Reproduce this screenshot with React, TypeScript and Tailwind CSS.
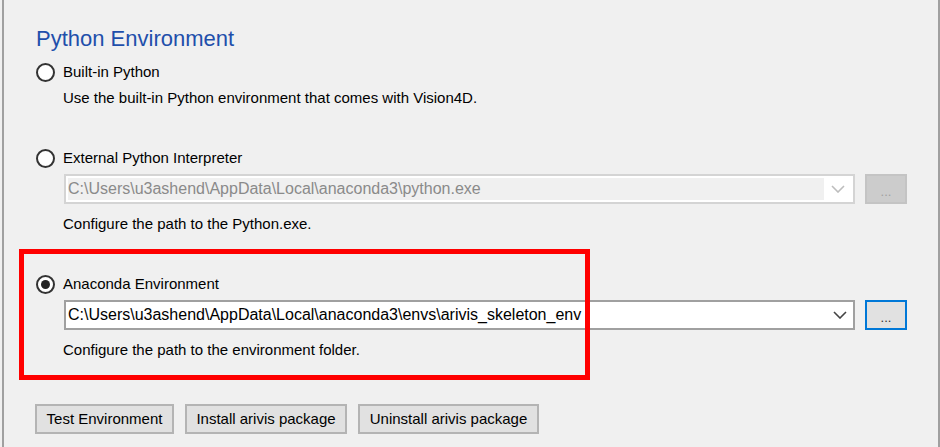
import React from 'react';

const font = { fontFamily: '"Liberation Sans", Arial, sans-serif' };

// === Radio button ===
const Radio = ({ checked, label }: { checked?: boolean; label: string }) => (
  <div className="flex h-[20px] items-center">
    <span className="ml-[32px] flex size-[19px] items-center justify-center rounded-full border-2 border-[#333333] bg-white">
      {checked && <span className="size-[9px] rounded-full bg-[#222222]" />}
    </span>
    <span className="ml-[8px] text-[15px] leading-[20px] text-black">{label}</span>
  </div>
);

const Chevron = ({ color }: { color: string }) => (
  <svg width="14" height="8" viewBox="0 0 14 8" fill="none">
    <path d="M1 1 L7 7 L13 1" stroke={color} strokeWidth="1.6" />
  </svg>
);

// === Path combobox with browse button ===
const PathRow = ({ value, disabled }: { value: string; disabled?: boolean }) => (
  <div className="ml-[60px] flex h-[30px] items-stretch">
    {disabled ? (
      <div className="flex w-[791px] items-stretch border-2 border-[#d4d4d4] bg-white p-[2px]">
        <div className="flex flex-1 items-center bg-[#f0f0f0] pl-[0px] text-[16px] text-[#8a8a8a]">{value}</div>
        <div className="flex w-[27px] items-center justify-center">
          <Chevron color="#bdbdbd" />
        </div>
      </div>
    ) : (
      <div className="flex w-[791px] items-center border-2 border-[#a0a0a0] bg-white">
        <div className="flex flex-1 items-center pl-[2px] text-[16px] text-black">{value}</div>
        <div className="flex w-[27px] items-center justify-center">
          <Chevron color="#444444" />
        </div>
      </div>
    )}
    <button
      className={
        disabled
          ? 'ml-[10px] flex w-[42px] items-end justify-center border-2 border-[#c4c4c4] bg-[#cccccc] pb-[3px] text-[13px] leading-[14px] text-[#a0a0a0]'
          : 'ml-[10px] flex w-[42px] items-end justify-center border-2 border-[#0078d7] bg-[#e1e1e1] pb-[3px] text-[13px] leading-[14px] text-[#333333]'
      }
    >
      ...
    </button>
  </div>
);

const Desc = ({ text, className }: { text: string; className: string }) => (
  <div className={`ml-[59px] text-[15px] leading-[20px] text-black ${className}`}>{text}</div>
);

const ActionButton = ({ label, width }: { label: string; width: string }) => (
  <button className={`flex h-[30px] ${width} items-center justify-center border-2 border-[#b4b4b4] bg-[#e1e1e1] text-[15px] text-black`}>
    {label}
  </button>
);

const App = () => {
  return (
    <div className="relative h-[447px] w-[940px] overflow-hidden bg-[#f0f0f0] pl-[2px]" style={font}>
      <div className="flex h-full flex-col border-x-2 border-[#a0a0a0]">
        {/* === Title === */}
        <div className="ml-[32px] pt-[27px] text-[22px] leading-[24px] text-[#1f4fab]">Python Environment</div>

        {/* === Built-in === */}
        <div className="mt-[11px]">
          <Radio label="Built-in Python" />
        </div>
        <Desc className="mt-[6px]" text="Use the built-in Python environment that comes with Vision4D." />

        {/* === External interpreter === */}
        <div className="mt-[40px]">
          <Radio label="External Python Interpreter" />
        </div>
        <div className="mt-[6px]">
          <PathRow disabled value="C:\Users\u3ashend\AppData\Local\anaconda3\python.exe" />
        </div>
        <Desc className="mt-[10px]" text="Configure the path to the Python.exe." />

        {/* === Anaconda === */}
        <div className="mt-[40px]">
          <Radio checked label="Anaconda Environment" />
        </div>
        <div className="mt-[6px]">
          <PathRow value="C:\Users\u3ashend\AppData\Local\anaconda3\envs\arivis_skeleton_env" />
        </div>
        <Desc className="mt-[10px]" text="Configure the path to the environment folder." />

        {/* === Actions === */}
        <div className="ml-[31px] mt-[44px] flex gap-[11px]">
          <ActionButton label="Test Environment" width="w-[139px]" />
          <ActionButton label="Install arivis package" width="w-[162px]" />
          <ActionButton label="Uninstall arivis package" width="w-[181px]" />
        </div>
      </div>

      {/* === Annotation highlight === */}
      <div className="pointer-events-none absolute left-[19px] top-[249px] h-[131px] w-[571px] border-[5px] border-[#ff0000]" />
    </div>
  );
};

export default App;
